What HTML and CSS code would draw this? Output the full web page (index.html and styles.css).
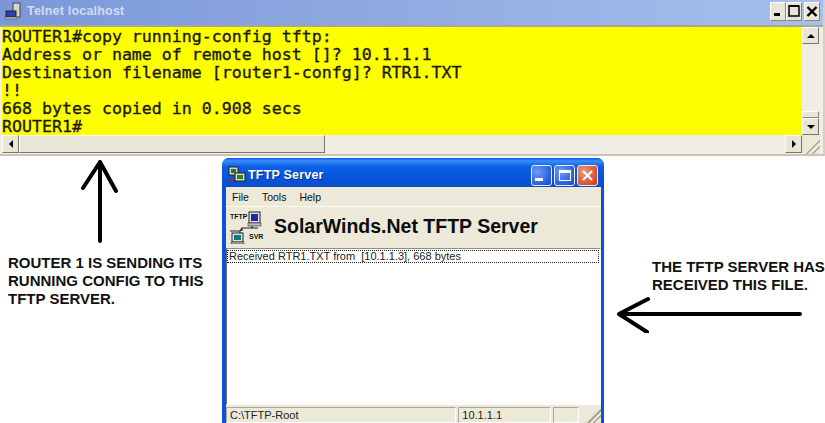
FILE: index.html
```html
<!DOCTYPE html>
<html lang="en">
<head>
<meta charset="utf-8">
<title>TFTP copy</title>
<link rel="stylesheet" href="styles.css">
</head>
<body>
<section class="telnet">
  <header class="telnet-title">
    <svg class="telnet-icon" width="18" height="18" viewBox="0 0 18 18"><rect x="9" y="1" width="7" height="14" fill="#d8d4c4" stroke="#444"/><rect x="2" y="9" width="10" height="6" fill="#2a3fb0" stroke="#222"/><rect x="1" y="15" width="12" height="2" fill="#bbb" stroke="#444" stroke-width=".5"/></svg>
    <span class="telnet-name">Telnet localhost</span>
    <div class="classic-buttons">
      <span class="classic-btn"><svg width="16" height="19" viewBox="0 0 16 19"><rect x="4" y="11" width="6" height="3" fill="#000"/></svg></span>
      <span class="classic-btn"><svg width="16" height="19" viewBox="0 0 16 19"><rect x="3" y="4" width="10" height="10" fill="none" stroke="#000" stroke-width="1.5"/><rect x="3" y="3" width="10" height="2" fill="#000"/></svg></span>
      <span class="classic-btn gap"><svg width="16" height="19" viewBox="0 0 16 19"><path d="M3.500 5 12.500 14M12.500 5 3.500 14" stroke="#000" stroke-width="2.400"/></svg></span>
    </div>
  </header>
  <div class="telnet-main">
    <pre class="terminal">ROUTER1#copy running-config tftp:
Address or name of remote host []? 10.1.1.1
Destination filename [router1-confg]? RTR1.TXT
!!
668 bytes copied in 0.908 secs
ROUTER1#</pre>
    <div class="vscroll">
      <span class="arrow-btn"><i class="tri up"></i></span>
      <span class="vspace"></span>
      <span class="vthumb"></span>
      <span class="arrow-btn"><i class="tri down"></i></span>
    </div>
  </div>
  <div class="hscroll">
    <span class="arrow-btn h"><i class="tri left"></i></span>
    <span class="hthumb"></span>
    <span class="arrow-btn h"><i class="tri right"></i></span>
    <span class="grip"></span>
  </div>
</section>

<svg class="arrow arrow-up" width="40" height="84" viewBox="0 0 40 84"><path d="M20 82V3M3 29 20 3 36 32" fill="none" stroke="#000" stroke-width="4" stroke-linecap="round" stroke-linejoin="round"/></svg>
<p class="note note-left">ROUTER 1 IS SENDING ITS<br>RUNNING CONFIG TO THIS<br>TFTP SERVER.</p>

<section class="tftp">
  <header class="tftp-title">
    <svg class="tftp-icon" width="18" height="18" viewBox="0 0 18 18"><rect x="1" y="1" width="9" height="8" fill="#dcd8c0" stroke="#222"/><rect x="3" y="3" width="5" height="4" fill="#157a2c"/><rect x="7" y="7" width="10" height="8" fill="#dcd8c0" stroke="#222"/><rect x="9" y="9" width="6" height="4" fill="#1c8a34"/><rect x="2" y="12" width="3" height="3" fill="#a02a3a"/></svg>
    <span class="tftp-name">TFTP Server</span>
    <div class="xp-buttons">
      <span class="xp-btn"><i class="xp-min"></i></span>
      <span class="xp-btn"><i class="xp-max"></i></span>
      <span class="xp-btn xp-close"><svg width="19" height="19" viewBox="0 0 19 19"><path d="M5 5 14 14M14 5 5 14" stroke="#fff" stroke-width="2.200"/></svg></span>
    </div>
  </header>
  <div class="tftp-body">
    <nav class="menu"><span>File</span><span>Tools</span><span>Help</span></nav>
    <div class="banner">
      <div class="logo">
        <span class="logo-t">TFTP</span>
        <span class="logo-s">SVR</span>
        <svg class="logo-art" width="38" height="34" viewBox="0 0 38 34"><path d="M2 21H12L14 18H30M24 18V14M12 21V26M14 18V21" stroke="#222" fill="none" stroke-width="1.200"/><rect x="21" y="2" width="11" height="11" fill="#e4e2d8" stroke="#222"/><rect x="23" y="4" width="7" height="7" fill="#1a2aa8"/><rect x="20" y="13" width="13" height="3" fill="#bbb" stroke="#333" stroke-width=".6"/><rect x="4" y="23" width="11" height="9" fill="#e4e2d8" stroke="#222"/><rect x="6" y="25" width="7" height="5" fill="#0c7a7a"/><rect x="3" y="32" width="13" height="2" fill="#8fbfb0" stroke="#333" stroke-width=".5"/></svg>
      </div>
      <span class="banner-title">SolarWinds.Net TFTP Server</span>
    </div>
    <div class="log"><div class="log-row">Received RTR1.TXT from&nbsp; [10.1.1.3], 668 bytes</div></div>
    <footer class="status">
      <span class="cell cell-path">C:\TFTP-Root</span>
      <span class="cell cell-ip">10.1.1.1</span>
      <span class="cell cell-empty"></span>
      <span class="grip"></span>
    </footer>
  </div>
</section>

<p class="note note-right">THE TFTP SERVER HAS<br>RECEIVED THIS FILE.</p>
<svg class="arrow arrow-left" width="188" height="40" viewBox="0 0 188 40"><path d="M185 21H4M33 6 4 21 32 39" fill="none" stroke="#000" stroke-width="4" stroke-linecap="round" stroke-linejoin="round"/></svg>
</body>
</html>
```
FILE: styles.css
```css
* { box-sizing: border-box; }
html, body { margin: 0; padding: 0; }
body { position: relative; width: 825px; height: 423px; overflow: hidden; background: #fff; font-family: "Liberation Sans", Arial, sans-serif; }

.telnet { position: absolute; left: 0; top: 0; width: 825px; height: 156px; background: #ece9d8; border-right: 2px solid #d4d0c8; border-bottom: 2px solid #c9c6b8; display: flex; flex-direction: column; }
.telnet-title { height: 27px; flex: none; display: flex; align-items: center; padding: 0 0 3px 4px; background: linear-gradient(90deg, #7b97d8, #a6c0ec); border-bottom: 2px solid #a8a698; }
.telnet-icon { flex: none; }
.telnet-name { margin-left: 5px; font: bold 12.500px "Liberation Sans", sans-serif; letter-spacing: .2px; color: #d0dcf4; }
.classic-buttons { margin-left: auto; display: flex; margin-right: 3px; }
.classic-btn { width: 16px; height: 19px; background: #e9e6d8; border: 1px solid; border-color: #fff #8a887c #8a887c #fff; display: block; overflow: hidden; }
.classic-btn svg { display: block; margin: -1px; }
.classic-btn.gap { margin-left: 2px; }

.telnet-main { flex: none; height: 108px; display: flex; padding-left: 2px; padding-right: 3px; background: #f0eee3; }
.terminal { flex: 1; margin: 0; height: 108px; padding-top: 1px; background: #ff0; color: #1a1a00; font: 16.600px/18px "DejaVu Sans Mono", monospace; -webkit-text-stroke: .35px #1a1a00; overflow: hidden; }
.vscroll { width: 18px; flex: none; display: flex; flex-direction: column; background: repeating-conic-gradient(#f6f5ef 0 25%, #e9e7dc 0 50%) 0 0 / 2px 2px; }
.vspace { flex: 1; }
.vthumb { width: 17px; height: 7px; flex: none; background: #e9e6d8; border: 1px solid; border-color: #fff #8a887c #8a887c #fff; }
.arrow-btn { width: 17px; height: 17px; flex: none; background: #e9e6d8; border: 1px solid; border-color: #fff #77756a #77756a #fff; display: flex; align-items: center; justify-content: center; }
.tri { width: 0; height: 0; border: 4px solid transparent; display: block; }
.tri.up { border-bottom-color: #000; margin-top: -4px; }
.tri.down { border-top-color: #000; margin-top: 4px; }
.tri.left { border-right-color: #000; margin-left: -4px; }
.tri.right { border-left-color: #000; margin-left: 4px; }
.hscroll { height: 19px; display: flex; padding-left: 2px; background: repeating-conic-gradient(#f6f5ef 0 25%, #e9e7dc 0 50%) 0 0 / 2px 2px; }
.hscroll .arrow-btn.h { height: 18px; }
.hthumb { width: 306px; height: 18px; background: #e9e6d8; border: 1px solid; border-color: #fff #77756a #77756a #fff; margin-right: auto; }
.hscroll .grip { width: 18px; background-color: #ece9d8; margin-right: 3px; }
.grip { flex: none; background: linear-gradient(135deg, transparent 60%, #a9a79b 60% 67%, transparent 67% 76%, #a9a79b 76% 83%, transparent 83%); }

.arrow { position: absolute; display: block; }
.arrow-up { left: 80px; top: 159px; }
.arrow-left { left: 615px; top: 293px; }
.note { position: absolute; margin: 0; font: bold 15px/18px "Liberation Sans", sans-serif; color: #111; white-space: nowrap; letter-spacing: 0; }
.note-left { left: 8px; top: 254px; }
.note-right { left: 652px; top: 258px; }

.tftp { position: absolute; left: 222px; top: 158px; width: 382px; height: 265px; background: #0a50d8; border-radius: 7px 7px 0 0; padding: 0 3px 0 4px; display: flex; flex-direction: column; }
.tftp-title { height: 29px; flex: none; display: flex; align-items: center; margin: 0 -3px 0 -4px; padding: 5px 6px 0 6px; border-radius: 7px 7px 0 0; background: linear-gradient(180deg, #0a5ce8 0, #3b8cf8 10%, #0b5fe6 30%, #0653dc 70%, #0a4fc8 100%); }
.tftp-name { margin-left: 2px; font: bold 12.500px "Liberation Sans", sans-serif; color: #fff; letter-spacing: .2px; text-shadow: 1px 1px 0 #0a2f90; }
.xp-buttons { margin-left: auto; display: flex; gap: 2px; }
.xp-btn { width: 21px; height: 21px; border: 1px solid #e8eefc; border-radius: 3px; background: radial-gradient(circle at 30% 30%, #6f9cf4, #2a5fdc 70%, #1a48c0); display: flex; align-items: center; justify-content: center; }
.xp-close { background: radial-gradient(circle at 30% 30%, #ee9a7c, #dc5030 70%, #c23a1c); }
.xp-close svg { display: block; }
.xp-min { display: block; width: 8px; height: 3px; background: #fff; margin: 8px 5px 0 0; }
.xp-max { display: block; width: 12px; height: 11px; border: 1px solid #fff; border-top-width: 3px; }

.tftp-body { flex: 1; min-height: 0; background: #ece9d8; display: flex; flex-direction: column; }
.menu { height: 20px; flex: none; display: flex; align-items: center; gap: 13px; padding-left: 6px; font: 10.500px "Liberation Sans", sans-serif; color: #111; border-bottom: 1px solid #fbfaf4; }
.banner { height: 41px; flex: none; display: flex; align-items: center; }
.logo { position: relative; width: 48px; height: 41px; flex: none; }
.logo-t { position: absolute; left: 4px; top: 6px; font: bold 7px "Liberation Sans", sans-serif; color: #111; }
.logo-s { position: absolute; left: 23px; top: 26px; font: bold 7px "Liberation Sans", sans-serif; color: #111; }
.logo-art { position: absolute; left: 2px; top: 3px; }
.banner-title { font: bold 19.500px "Liberation Sans", sans-serif; color: #0c0c0c; margin-top: -2px; }
.log { flex: 1; min-height: 0; background: #fff; border: 1px solid; border-color: #8f8d84 #fff #fff #6f6d66; padding: 1px 1px 0 0; }
.log-row { height: 13px; border: 1px dotted #222; font: 11px/11px "Liberation Sans", sans-serif; color: #222; padding-left: 1px; white-space: nowrap; }
.status { height: 18px; flex: none; display: flex; gap: 2px; padding-top: 2px; font: 11px/14px "Liberation Sans", sans-serif; color: #222; background: #ece9d8; }
.cell { display: block; height: 16px; border: 1px solid; border-color: #aaa89c #fff #fff #aaa89c; padding-left: 3px; }
.cell-path { width: 231px; }
.cell-ip { width: 93px; }
.cell-empty { width: 26px; }
.status .grip { width: 20px; }
```
